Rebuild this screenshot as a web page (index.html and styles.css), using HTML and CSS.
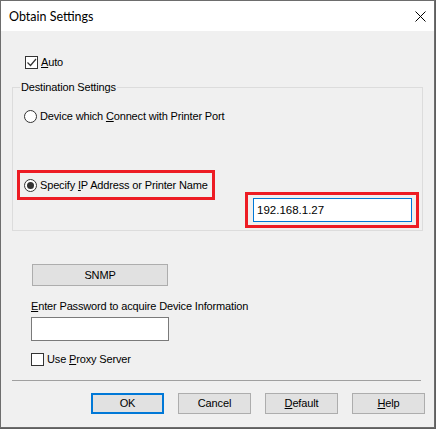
FILE: index.html
```html
<!DOCTYPE html>
<html>
<head>
<meta charset="utf-8">
<link rel="stylesheet" href="styles.css">
</head>
<body>
<div class="window">
  <div class="titlebar">
    <span class="title">Obtain Settings</span>
    <svg class="close" width="11" height="11" viewBox="0 0 11 11"><path d="M0.5 0.5 L10.5 10.5 M10.5 0.5 L0.5 10.5" stroke="#000" stroke-width="1" fill="none"/></svg>
  </div>
  <div class="content">
    <div class="check-row auto-row">
      <span class="checkbox"><svg width="11" height="11" viewBox="0 0 11 11"><path d="M1.5 5.5 L4.5 8.5 L10 2" stroke="#333" stroke-width="1.2" fill="none"/></svg></span>
      <span class="label"><u>A</u>uto</span>
    </div>
    <fieldset class="group">
      <legend>Destination Settings</legend>
      <div class="radio-row first-radio">
        <span class="radio"></span>
        <span class="label">Device which <u>C</u>onnect with Printer Port</span>
      </div>
      <div class="ip-row">
        <div class="highlight hl-radio">
          <div class="radio-row">
            <span class="radio checked"><span class="dot"></span></span>
            <span class="label">Specify <u>I</u>P Address or Printer Name</span>
          </div>
        </div>
        <div class="highlight hl-input">
          <div class="textbox focused">192.168.1.27</div>
        </div>
      </div>
    </fieldset>
    <div class="btn snmp">SNMP</div>
    <div class="field-label"><u>E</u>nter Password to acquire Device Information</div>
    <div class="textbox password"></div>
    <div class="check-row proxy-row">
      <span class="checkbox"></span>
      <span class="label">Use <u>P</u>roxy Server</span>
    </div>
    <div class="separator"></div>
    <div class="buttons">
      <div class="btn default-btn">OK</div>
      <div class="btn">Cancel</div>
      <div class="btn"><u>D</u>efault</div>
      <div class="btn"><u>H</u>elp</div>
    </div>
  </div>
</div>
</body>
</html>
```

FILE: styles.css
```css
* { box-sizing: border-box; }
html, body { margin: 0; padding: 0; }
body {
  background: #5f5f5f;
  width: 436px;
  height: 429px;
  overflow: hidden;
  font-family: "Liberation Sans", Arial, sans-serif;
  font-size: 11px;
  letter-spacing: -0.15px;
  color: #000;
}
.window {
  width: 435px;
  height: 428px;
  border: 1px solid #6d6d6d;
  background: #f0f0f0;
  display: flex;
  flex-direction: column;
}
.titlebar {
  height: 30px;
  background: #fff;
  display: flex;
  align-items: center;
  padding-left: 8px;
  padding-right: 8px;
  flex-shrink: 0;
}
.title {
  font-family: "Lato", "Noto Sans", sans-serif;
  font-size: 12.5px;
  letter-spacing: 0;
  flex: 1;
  padding-top: 1px;
}
.close { margin-right: 0; margin-top: 1px; }
.content { flex: 1; display: flex; flex-direction: column; align-items: flex-start; }
u { text-decoration: underline; text-underline-offset: 1px; }
.label { line-height: 13px; white-space: nowrap; }
.check-row, .radio-row { display: flex; align-items: center; height: 13px; }
.checkbox {
  width: 13px; height: 13px;
  border: 1px solid #333;
  background: #fff;
  display: flex; align-items: center; justify-content: center;
  margin-right: 3px;
  flex-shrink: 0;
}
.checkbox svg { display: block; }
.auto-row { margin-top: 25px; margin-left: 24px; }
.group {
  margin: 12px 0 0 11px;
  width: 411px;
  padding: 0 0 2px 0;
  border: 1px solid #dcdcdc;
  min-width: 0;
}
.group legend {
  margin-left: 7px;
  padding: 0 1px;
  line-height: 13px;
}
.radio {
  width: 13px; height: 13px;
  border: 1px solid #333;
  border-radius: 50%;
  background: #fff;
  margin-right: 3px;
  display: flex; align-items: center; justify-content: center;
  flex-shrink: 0;
}
.radio .dot { width: 7px; height: 7px; border-radius: 50%; background: #333; }
.first-radio { margin-top: 16px; margin-left: 11px; }
.ip-row { display: flex; align-items: flex-start; margin-top: 47px; }
.highlight { border: 3px solid #ed1c24; }
.hl-radio {
  margin-left: 4px;
  width: 198px; height: 30px;
  padding-left: 4px;
  display: flex; align-items: center;
}
.hl-input {
  margin-left: auto;
  margin-right: 3px;
  margin-top: 22px;
  width: 174px; height: 36px;
  padding: 3px 0 0 5px;
}
.textbox {
  background: #fff;
  border: 1px solid #7a7a7a;
}
.textbox.focused {
  border-color: #0078d7;
  width: 159px; height: 24px;
  padding-left: 3px;
  line-height: 22px;
  font-size: 11.5px;
  letter-spacing: 0;
}
.btn {
  width: 73px; height: 21px;
  border: 1px solid #adadad;
  background: #e1e1e1;
  display: flex; align-items: center; justify-content: center;
  line-height: 13px;
}
.snmp { margin: 33px 0 0 31px; width: 136px; height: 22px; }
.field-label { margin: 14px 0 0 30px; line-height: 13px; }
.password { margin: 4px 0 0 30px; width: 138px; height: 24px; }
.proxy-row { margin: 12px 0 0 30px; }
.separator { margin: 14px 0 0 11px; width: 409px; height: 1px; background: #a0a0a0; }
.buttons { display: flex; gap: 14px; margin: 12px 0 0 90px; }
.default-btn { border: 2px solid #0078d7; }
```
